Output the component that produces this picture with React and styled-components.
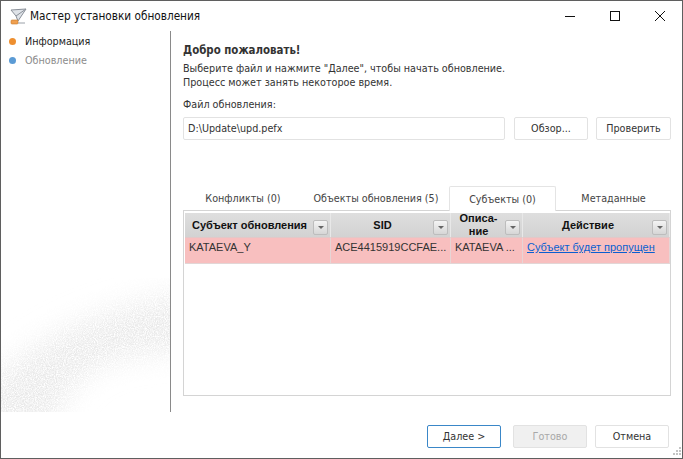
import React from 'react';
import styled, { createGlobalStyle } from 'styled-components';

const GlobalStyle = createGlobalStyle`
  html, body {
    margin: 0;
    padding: 0;
    background: #ffffff;
  }
  * {
    box-sizing: border-box;
  }
`;

const uiFont = `"DejaVu Sans Condensed", "DejaVu Sans", sans-serif`;
const gridFont = `"Liberation Sans", Arial, sans-serif`;

const Window = styled.div`
  width: 683px;
  height: 459px;
  display: flex;
  flex-direction: column;
  background: #fff;
  border: 1px solid #5f5f5f;
  font-family: ${uiFont};
  font-stretch: condensed;
  font-size: 10.7px;
  color: #333;
  position: relative;
  overflow: hidden;
`;

const TitleBar = styled.div`
  height: 30px;
  flex: none;
  display: flex;
  align-items: center;
  padding-left: 9px;
`;

const AppTitle = styled.span`
  margin-left: 3px;
  font-size: 11.7px;
  color: #111;
`;

const WindowButtons = styled.div`
  margin-left: auto;
  display: flex;
`;

const WindowButton = styled.div`
  width: 45px;
  height: 30px;
  display: flex;
  align-items: center;
  justify-content: center;
`;

const Body = styled.div`
  flex: 1;
  display: flex;
  min-height: 0;
`;

const Sidebar = styled.div`
  width: 170px;
  flex: none;
  border-right: 1px solid #8a8a8a;
  position: relative;
  padding: 1px 0 0 8px;
  overflow: hidden;
`;

const Grain = styled.svg`
  position: absolute;
  left: 0;
  bottom: 0;
  width: 169px;
  height: 170px;
`;

const Step = styled.div`
  position: relative;
  height: 19px;
  display: flex;
  align-items: center;
  gap: 9px;
  color: ${(p) => (p.$active ? '#222' : '#8c8c8c')};
`;

const Dot = styled.span`
  width: 7px;
  height: 7px;
  border-radius: 50%;
  background: ${(p) => p.$color};
`;

const Content = styled.div`
  flex: 1;
  min-width: 0;
  padding: 11px 11px 0 12px;
  display: flex;
  flex-direction: column;
`;

const Heading = styled.div`
  font-weight: 700;
  font-size: 11.4px;
  line-height: 16px;
  color: #333;
`;

const Intro = styled.div`
  margin-top: 4px;
  line-height: 14px;
`;

const FieldLabel = styled.div`
  margin-top: 8px;
  line-height: 14px;
`;

const FileRow = styled.div`
  margin-top: 5px;
  display: flex;
  height: 23px;
`;

const FileInput = styled.div`
  width: 322px;
  border: 1px solid #e2e2e2;
  border-radius: 2px;
  display: flex;
  align-items: center;
  padding-left: 4px;
`;

const Button = styled.div`
  width: ${(p) => p.$w}px;
  margin-left: ${(p) => p.$gap}px;
  height: 23px;
  display: flex;
  align-items: center;
  justify-content: center;
  border-radius: 2px;
  border: 1px solid ${(p) => (p.$primary ? '#3a87c8' : '#e2e2e2')};
  background: ${(p) => (p.$disabled ? '#f0f0f0' : '#fff')};
  color: ${(p) => (p.$disabled ? '#a8a8a8' : '#333')};
`;

const Tabs = styled.div`
  margin-top: 46px;
  height: 24px;
  display: flex;
  position: relative;
  z-index: 1;
`;

const Tab = styled.div`
  width: ${(p) => p.$w}px;
  height: 25px;
  display: flex;
  align-items: center;
  justify-content: center;
  color: #444;
  ${(p) =>
    p.$active &&
    `
    background: #fff;
    border: 1px solid #e4e4e4;
    border-bottom: none;
    border-radius: 2px 2px 0 0;
  `}
`;

const GridBox = styled.div`
  width: 488px;
  height: 186px;
  border: 1px solid #d4d4d4;
  padding: 2px 1px 0;
  font-family: ${gridFont};
  font-stretch: normal;
  font-size: 11px;
`;

const Columns = styled.div`
  display: grid;
  grid-template-columns: 146px 120px 72px 147px;
`;

const HeadCell = styled.div`
  height: 24px;
  background: linear-gradient(#dedede, #d2d2d2);
  border-right: 1px solid #e8e8e8;
  display: flex;
  align-items: center;
  padding: 0 2px 0 5px;
  font-weight: 700;
  color: #111;
  overflow: hidden;
`;

const HeadText = styled.div`
  flex: 1;
  text-align: center;
  line-height: 13px;
  margin-right: 4px;
  white-space: ${(p) => (p.$wrap ? 'normal' : 'nowrap')};
`;

const FilterButton = styled.div`
  width: 15px;
  height: 15px;
  flex: none;
  margin-top: 5px;
  border: 1px solid #bdbdbd;
  border-radius: 2px;
  background: linear-gradient(#f4f4f4, #d6d6d6);
  display: flex;
  align-items: center;
  justify-content: center;
  &::after {
    content: '';
    border-left: 3px solid transparent;
    border-right: 3px solid transparent;
    border-top: 3px solid #666;
  }
`;

const DataCell = styled.div`
  height: 27px;
  background: #f8bfbf;
  border-right: 1px solid #e6d5d5;
  border-bottom: 1px solid #e2d6d6;
  border-top: 1px solid #e2c8c8;
  padding: 2px 0 0 4px;
  line-height: 14px;
  color: #333;
  white-space: nowrap;
`;

const ActionLink = styled.a`
  color: #0a5fd0;
  text-decoration: underline;
`;

const Footer = styled.div`
  height: 46px;
  flex: none;
  display: flex;
  align-items: flex-start;
  padding: 13px 0 0 426px;
`;

const ResizeGrip = styled.svg`
  position: absolute;
  right: 0;
  bottom: 0;
`;

const columns = [
  { title: 'Субъект обновления', cell: 'KATAEVA_Y' },
  { title: 'SID', cell: 'ACE4415919CCFAE...' },
  { title: 'Описа-ние', cell: 'KATAEVA ...', wrap: true },
  { title: 'Действие', link: 'Субъект будет пропущен' },
];

const tabs = [
  { label: 'Конфликты (0)', w: 120 },
  { label: 'Объекты обновления (5)', w: 146 },
  { label: 'Субъекты (0)', w: 107, active: true },
  { label: 'Метаданные', w: 115 },
];

const AppIcon = () => (
  <svg width="17" height="17" viewBox="0 0 17 17" fill="none">
    <path d="M1 2 L16 1 L8 13 L6 8 Z" fill="#dfe3e8" stroke="#8a9099" strokeWidth="1" />
    <path d="M6 8 L16 1" stroke="#8a9099" strokeWidth="1" />
    <rect x="1" y="12" width="7" height="4" rx="1" fill="#f0a050" stroke="#c87a2a" strokeWidth="0.6" />
    <path d="M8 15 H15" stroke="#9aa0a8" strokeWidth="1" />
  </svg>
);

const App = () => (
  <>
    <GlobalStyle />
    <Window>
      <TitleBar>
        <AppIcon />
        <AppTitle>Мастер установки обновления</AppTitle>
        <WindowButtons>
          <WindowButton>
            <svg width="10" height="10" viewBox="0 0 10 10"><path d="M0 5.5H10" stroke="#111" /></svg>
          </WindowButton>
          <WindowButton>
            <svg width="10" height="10" viewBox="0 0 10 10"><rect x="0.5" y="0.5" width="9" height="9" fill="none" stroke="#111" /></svg>
          </WindowButton>
          <WindowButton>
            <svg width="10" height="10" viewBox="0 0 10 10"><path d="M0 0L10 10M10 0L0 10" stroke="#111" /></svg>
          </WindowButton>
        </WindowButtons>
      </TitleBar>
      <Body>
        <Sidebar>
          <Grain viewBox="0 0 169 170" preserveAspectRatio="none">
            <defs>
              <filter id="grain">
                <feTurbulence type="fractalNoise" baseFrequency="0.9" numOctaves="2" seed="4" />
                <feColorMatrix values="0 0 0 0 1  0 0 0 0 1  0 0 0 0 1  0 0 0 2.4 -0.8" />
              </filter>
              <filter id="soft"><feGaussianBlur stdDeviation="14" /></filter>
            </defs>
            <path d="M-20 150 C20 110 70 70 190 50 L190 110 C120 110 70 120 50 190 L-20 190 Z" fill="#e8e8e8" filter="url(#soft)" />
            <rect width="169" height="170" filter="url(#grain)" />
          </Grain>
          <Step $active><Dot $color="#ee8f2f" />Информация</Step>
          <Step><Dot $color="#5b9bd5" />Обновление</Step>
        </Sidebar>
        <Content>
          <Heading>Добро пожаловать!</Heading>
          <Intro>
            Выберите файл и нажмите "Далее", чтобы начать обновление.
            <br />
            Процесс может занять некоторое время.
          </Intro>
          <FieldLabel>Файл обновления:</FieldLabel>
          <FileRow>
            <FileInput>D:\Update\upd.pefx</FileInput>
            <Button $w={74} $gap={9}>Обзор...</Button>
            <Button $w={75} $gap={8}>Проверить</Button>
          </FileRow>
          <Tabs>
            {tabs.map((tab) => (
              <Tab key={tab.label} $w={tab.w} $active={tab.active}>{tab.label}</Tab>
            ))}
          </Tabs>
          <GridBox>
            <Columns>
              {columns.map((col) => (
                <HeadCell key={col.title}>
                  <HeadText $wrap={col.wrap}>{col.title}</HeadText>
                  <FilterButton />
                </HeadCell>
              ))}
              {columns.map((col) => (
                <DataCell key={col.title}>
                  {col.link ? <ActionLink>{col.link}</ActionLink> : col.cell}
                </DataCell>
              ))}
            </Columns>
          </GridBox>
        </Content>
      </Body>
      <Footer>
        <Button $w={74} $primary>Далее &gt;</Button>
        <Button $w={74} $gap={12} $disabled>Готово</Button>
        <Button $w={74} $gap={8}>Отмена</Button>
      </Footer>
      <ResizeGrip width="12" height="12" viewBox="0 0 12 12">
        <path d="M9 1h2v2H9zM6 4h2v2H6zM9 4h2v2H9zM3 7h2v2H3zM6 7h2v2H6zM9 7h2v2H9z" fill="#c4c4c4" />
      </ResizeGrip>
    </Window>
  </>
);

export default App;
